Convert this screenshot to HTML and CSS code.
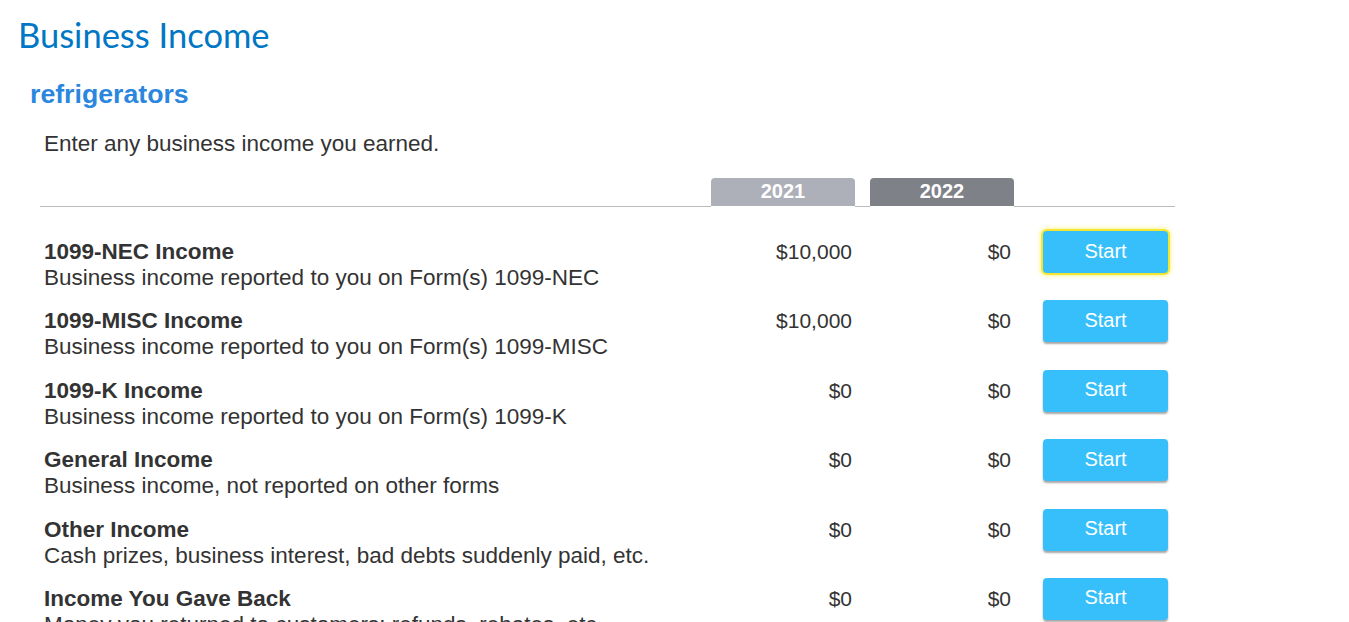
FILE: index.html
```html
<!DOCTYPE html>
<html lang="en">
<head>
    <meta charset="UTF-8">
    <title>Business Income</title>
    <link rel="stylesheet" href="styles.css">
</head>
<body>
    <h1 class="page-title">Business Income</h1>
    <h2 class="business-name">refrigerators</h2>
    <p class="intro">Enter any business income you earned.</p>

    <div class="income-table">
        <div class="head-row">
            <div></div>
            <div class="year-tab prior">2021</div>
            <div class="year-tab current">2022</div>
            <div></div>
        </div>

        <div class="income-row">
            <div class="label">
                <div class="name">1099-NEC Income</div>
                <div class="desc">Business income reported to you on Form(s) 1099-NEC</div>
            </div>
            <div class="amount">$10,000</div>
            <div class="amount">$0</div>
            <div class="action"><button class="start-btn focused">Start</button></div>
        </div>

        <div class="income-row">
            <div class="label">
                <div class="name">1099-MISC Income</div>
                <div class="desc">Business income reported to you on Form(s) 1099-MISC</div>
            </div>
            <div class="amount">$10,000</div>
            <div class="amount">$0</div>
            <div class="action"><button class="start-btn">Start</button></div>
        </div>

        <div class="income-row">
            <div class="label">
                <div class="name">1099-K Income</div>
                <div class="desc">Business income reported to you on Form(s) 1099-K</div>
            </div>
            <div class="amount">$0</div>
            <div class="amount">$0</div>
            <div class="action"><button class="start-btn">Start</button></div>
        </div>

        <div class="income-row">
            <div class="label">
                <div class="name">General Income</div>
                <div class="desc">Business income, not reported on other forms</div>
            </div>
            <div class="amount">$0</div>
            <div class="amount">$0</div>
            <div class="action"><button class="start-btn">Start</button></div>
        </div>

        <div class="income-row">
            <div class="label">
                <div class="name">Other Income</div>
                <div class="desc">Cash prizes, business interest, bad debts suddenly paid, etc.</div>
            </div>
            <div class="amount">$0</div>
            <div class="amount">$0</div>
            <div class="action"><button class="start-btn">Start</button></div>
        </div>

        <div class="income-row">
            <div class="label">
                <div class="name">Income You Gave Back</div>
                <div class="desc">Money you returned to customers: refunds, rebates, etc.</div>
            </div>
            <div class="amount">$0</div>
            <div class="amount">$0</div>
            <div class="action"><button class="start-btn">Start</button></div>
        </div>
    </div>
</body>
</html>
```

FILE: styles.css
```css
body {
    margin: 0;
    padding: 0;
    font-family: "Liberation Sans", Arial, sans-serif;
    color: #333;
    background-color: #fff;
}
.page-title {
    font-family: Lato, "Open Sans", sans-serif;
    font-weight: 400;
    font-size: 34.5px;
    color: #0077c5;
    margin: 0;
    padding: 15px 0 0 18px;
    line-height: 40px;
}
.business-name {
    font-size: 26.7px;
    font-weight: bold;
    color: #2b86de;
    margin: 24px 0 0 30px;
    line-height: 30px;
}
.intro {
    font-size: 22.5px;
    margin: 22px 0 0 44px;
    line-height: 26px;
}
.income-table {
    margin: 21px 0 0 40px;
    width: 1135px;
}
.head-row,
.income-row {
    display: grid;
    grid-template-columns: 1fr 144px 144px 139px;
    column-gap: 15px;
    padding-right: 7px;
}
.head-row {
    border-bottom: 1px solid #bbb;
    height: 28px;
    margin-bottom: 32px;
}
.year-tab {
    color: #fff;
    font-weight: bold;
    font-size: 20px;
    text-align: center;
    line-height: 26px;
    border-radius: 4px 4px 0 0;
    height: 28px;
    box-shadow: 0 2px 0 0 #fff, 2px 0 0 0 #fff, -2px 0 0 0 #fff;
}
.year-tab.prior {
    background-color: #adb0b8;
}
.year-tab.current {
    background-color: #7f8189;
}
.income-row {
    padding-left: 4px;
    padding-bottom: 17.4px;
    font-size: 22.5px;
    line-height: 26px;
}
.name {
    font-weight: bold;
}
.amount {
    text-align: right;
    padding-right: 3px;
    font-size: 21px;
}
.action {
    display: flex;
    justify-content: flex-end;
    align-items: flex-start;
    margin-top: -8px;
}
.start-btn {
    width: 125px;
    height: 42px;
    border: none;
    border-radius: 4px;
    background-color: #36bffa;
    color: #fff;
    font-family: "Liberation Sans", Arial, sans-serif;
    font-size: 20px;
    box-shadow: 0 2px 2px rgba(0, 0, 0, 0.35);
    padding: 0 0 2px 0;
}
.start-btn.focused {
    box-shadow: 0 0 0 2px #f4e531, 0 0 4px 3px rgba(255, 240, 80, 0.6);
}
```
